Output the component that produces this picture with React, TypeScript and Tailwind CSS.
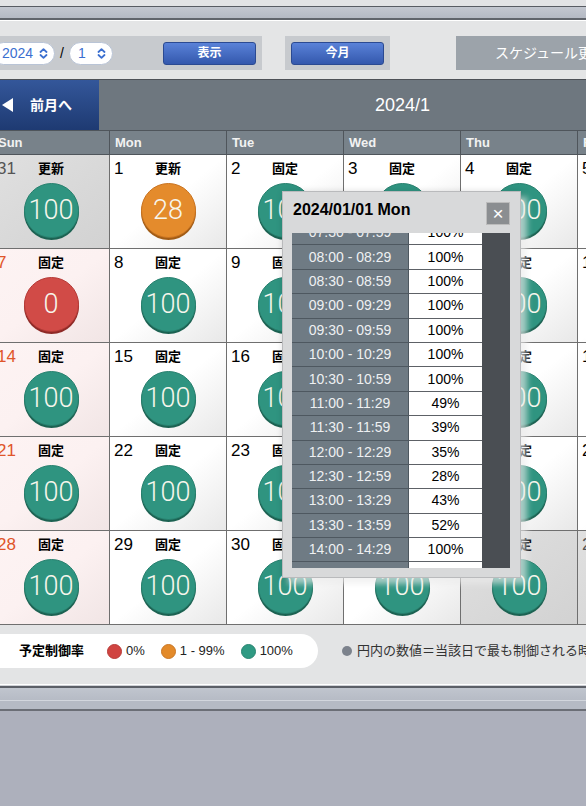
import React from 'react';

type Day = { n: number; label: string; v: number; sun: boolean; other: boolean };

const days: Day[] = [];
const nums = [31, ...Array.from({ length: 31 }, (_, i) => i + 1), 1, 2, 3];
nums.forEach((n, i) => {
  const other = i === 0 || i > 31;
  let v = 100;
  if (!other && n === 1) v = 28;
  if (!other && n === 7) v = 0;
  days.push({ n, label: i < 2 ? '更新' : '固定', v, sun: i % 7 === 0, other });
});
const weeks: Day[][] = [];
for (let i = 0; i < days.length; i += 7) weeks.push(days.slice(i, i + 7));

const slots: [string, string][] = [
  ['07:30 - 07:59', '100%'],
  ['08:00 - 08:29', '100%'],
  ['08:30 - 08:59', '100%'],
  ['09:00 - 09:29', '100%'],
  ['09:30 - 09:59', '100%'],
  ['10:00 - 10:29', '100%'],
  ['10:30 - 10:59', '100%'],
  ['11:00 - 11:29', '49%'],
  ['11:30 - 11:59', '39%'],
  ['12:00 - 12:29', '35%'],
  ['12:30 - 12:59', '28%'],
  ['13:00 - 13:29', '43%'],
  ['13:30 - 13:59', '52%'],
  ['14:00 - 14:29', '100%'],
  ['14:30 - 14:59', '100%'],
];

function Chevrons() {
  return (
    <svg width="9" height="11" viewBox="0 0 9 11" fill="none" stroke="#3b6fd0" strokeWidth="1.8" strokeLinecap="round" strokeLinejoin="round">
      <path d="M1.5 4 L4.5 1.2 L7.5 4" />
      <path d="M1.5 7 L4.5 9.8 L7.5 7" />
    </svg>
  );
}

function Circle({ v }: { v: number }) {
  const cls =
    v === 0
      ? 'bg-[#d14b47] border-[#b53a36] shadow-[0_2px_0_#8e2a27]'
      : v < 100
      ? 'bg-[#e48b2c] border-[#c97320] shadow-[0_2px_0_#a15c16]'
      : 'bg-[#2f9480] border-[#27806e] shadow-[0_2px_0_#1c6252]';
  return (
    <div className={`mx-auto mt-[4px] flex h-[55px] w-[55px] items-center justify-center rounded-full border ${cls}`}>
      <span className="font-['Roboto',sans-serif] text-[27px] font-light leading-none text-[#f7f6ec]">{v}</span>
    </div>
  );
}

function Cell({ d }: { d: Day }) {
  const bg = d.other
    ? 'bg-gradient-to-br from-[#e0e0e0] to-[#d2d2d2]'
    : d.sun
    ? 'bg-gradient-to-br from-[#fdf3f3] via-[#fcf1f1] to-[#f1e5e5]'
    : 'bg-gradient-to-br from-white via-white to-[#e8e8e8]';
  const numColor = d.other ? 'text-[#555]' : d.sun ? 'text-[#e0552a]' : 'text-black';
  return (
    <div className={`h-[94px] border-b border-r border-[#6f6f6f] ${bg}`}>
      <div className="grid grid-cols-[1fr_auto_1fr] items-center pt-[4px]">
        <span className={`pl-[4px] text-[17px] leading-[20px] ${numColor}`}>{d.n}</span>
        <span className="text-[13px] font-bold leading-[20px] text-black">{d.label}</span>
        <span />
      </div>
      <Circle v={d.v} />
    </div>
  );
}

export default function App() {
  return (
    <div className="relative min-h-screen w-full overflow-hidden bg-[#adb0bc] font-['Liberation_Sans','Noto_Sans_CJK_JP',sans-serif]">
      {/* window chrome */}
      <div className="h-[6px] bg-[#e2e3e5]" />
      <div className="h-px bg-[#585c63]" />
      <div className="h-[11px] bg-gradient-to-b from-[#c3c7d0] to-[#b4b9c3]" />
      <div className="h-[2px] bg-[#60646b]" />
      <div className="h-px bg-white" />

      {/* toolbar */}
      <div className="h-[58px] bg-[#e4e5e6] pt-[15px]">
        <div className="flex h-[34px] w-[900px] items-stretch">
          <div className="ml-[-14px] flex w-[276px] shrink-0 items-center bg-[#c7cace] pl-[6px] pr-[6px]">
            <div className="flex h-[23px] w-[63px] shrink-0 items-center justify-between rounded-full border border-[#b9c4d6] bg-white pl-[9px] pr-[6px] text-[14px] text-[#3b6fd0]">
              <span>2024</span>
              <Chevrons />
            </div>
            <span className="mx-[5px] text-[14px] text-black">/</span>
            <div className="flex h-[23px] w-[44px] shrink-0 items-center justify-between rounded-full border border-[#b9c4d6] bg-white pl-[8px] pr-[6px] text-[14px] text-[#3b6fd0]">
              <span>1</span>
              <Chevrons />
            </div>
            <button className="ml-auto h-[23px] w-[93px] shrink-0 rounded-[3px] border border-[#2b4a92] bg-gradient-to-b from-[#5a82d8] to-[#3458ad] text-[12px] font-bold text-white">
              表示
            </button>
          </div>
          <div className="ml-[23px] flex w-[105px] shrink-0 items-center justify-center bg-[#c7cace]">
            <button className="h-[23px] w-[93px] shrink-0 rounded-[3px] border border-[#2b4a92] bg-gradient-to-b from-[#5a82d8] to-[#3458ad] text-[12px] font-bold text-white">
              今月
            </button>
          </div>
          <div className="ml-[66px] flex w-[200px] shrink-0 items-center bg-[#9ca3aa] pl-[39px] text-[14px] whitespace-nowrap text-white">
            スケジュール更新
          </div>
        </div>
      </div>

      {/* calendar */}
      <div className="ml-[-7px] w-[819px] border-t border-[#4d5157]">
        <div className="flex h-[50px] items-stretch bg-[#6e777f]">
          <div className="flex w-[106px] shrink-0 items-center bg-gradient-to-b from-[#34579a] to-[#1e3a72] pl-[9px] text-white">
            <svg width="11" height="14" viewBox="0 0 11 14">
              <path d="M0 7 L11 0 L11 14 Z" fill="white" />
            </svg>
            <span className="ml-[17px] text-[14px] font-bold">前月へ</span>
          </div>
          <div className="flex flex-1 items-center justify-center text-[18px] text-white">2024/1</div>
          <div className="flex w-[106px] shrink-0 items-center justify-end bg-gradient-to-b from-[#34579a] to-[#1e3a72] pr-[9px] text-white">
            <span className="mr-[17px] text-[14px] font-bold">次月へ</span>
          </div>
        </div>
        <div className="grid h-[25px] grid-cols-7 border-y border-[#4f555b] bg-[#78828a]">
          {['Sun', 'Mon', 'Tue', 'Wed', 'Thu', 'Fri', 'Sat'].map((w) => (
            <div key={w} className="flex items-center border-r border-[#4f555b] pl-[5px] text-[13px] font-bold text-[#f2f2f2]">
              {w}
            </div>
          ))}
        </div>
        {weeks.map((w, i) => (
          <div key={i} className="grid grid-cols-7">
            {w.map((d, j) => (
              <Cell key={j} d={d} />
            ))}
          </div>
        ))}
      </div>

      {/* legend */}
      <div className="h-[59px] bg-[#e3e4e5] pt-[9px]">
        <div className="flex w-[900px] items-center">
          <div className="ml-[-20px] flex h-[34px] w-[338px] shrink-0 items-center rounded-full bg-white pl-[39px] text-[13px] whitespace-nowrap text-[#222]">
            <span className="font-bold text-black">予定制御率</span>
            <span className="ml-[23px] h-[15px] w-[15px] shrink-0 rounded-full border border-[#b83a37] bg-[#d04441]" />
            <span className="ml-[4px]">0%</span>
            <span className="ml-[16px] h-[15px] w-[15px] shrink-0 rounded-full border border-[#c97624] bg-[#e38a2a]" />
            <span className="ml-[4px]">1 - 99%</span>
            <span className="ml-[16px] h-[15px] w-[15px] shrink-0 rounded-full border border-[#278470] bg-[#2f9a83]" />
            <span className="ml-[4px]">100%</span>
          </div>
          <span className="ml-[24px] h-[10px] w-[10px] shrink-0 rounded-full bg-[#7c828c]" />
          <span className="ml-[5px] text-[13px] whitespace-nowrap text-[#333]">円内の数値＝当該日で最も制御される時間帯の予定制御率</span>
        </div>
      </div>
      <div className="h-px bg-white" />
      <div className="h-px bg-[#cfd1d6]" />
      <div className="h-[2px] bg-[#5b5f67]" />
      <div className="h-[12px] bg-gradient-to-b from-[#c0c5ce] to-[#b6bbc5]" />
      <div className="h-px bg-[#d2d6dd]" />
      <div className="h-[8px] bg-[#b5bac4]" />
      <div className="h-[2px] bg-[#6b6e76]" />

      {/* popup */}
      <div className="absolute left-[282px] top-[191px] h-[387px] w-[239px] border border-[#b9babc] bg-[#d8d9da] shadow-[6px_6px_6px_rgba(255,255,255,0.6),2px_2px_8px_rgba(0,0,0,0.2)]">
        <div className="flex h-[41px] items-start justify-between pl-[10px] pr-[10px]">
          <span className="pt-[8px] text-[16px] font-bold leading-[20px] text-black">2024/01/01 Mon</span>
          <button className="mt-[10px] flex h-[23px] w-[24px] items-center justify-center border border-[#bcbcbc] bg-[#8b8e91] text-[19px] leading-none text-white">
            ×
          </button>
        </div>
        <div className="mx-[9px] flex h-[335px] overflow-hidden">
          <div className="w-[190px]">
            <div className="mt-[-12px]">
              {slots.map(([t, v]) => (
                <div key={t} className="flex h-[24.4px]">
                  <div className="flex w-[117px] items-center justify-center border-b border-r border-[#4e5860] bg-[#6f7b84] text-[14px] text-[#eef0f2]">
                    {t}
                  </div>
                  <div className="flex w-[73px] items-center justify-center border-b border-[#5d6166] bg-white text-[14px] text-black">
                    {v}
                  </div>
                </div>
              ))}
            </div>
          </div>
          <div className="w-[28px] bg-[#4a4e53]" />
        </div>
      </div>
    </div>
  );
}
